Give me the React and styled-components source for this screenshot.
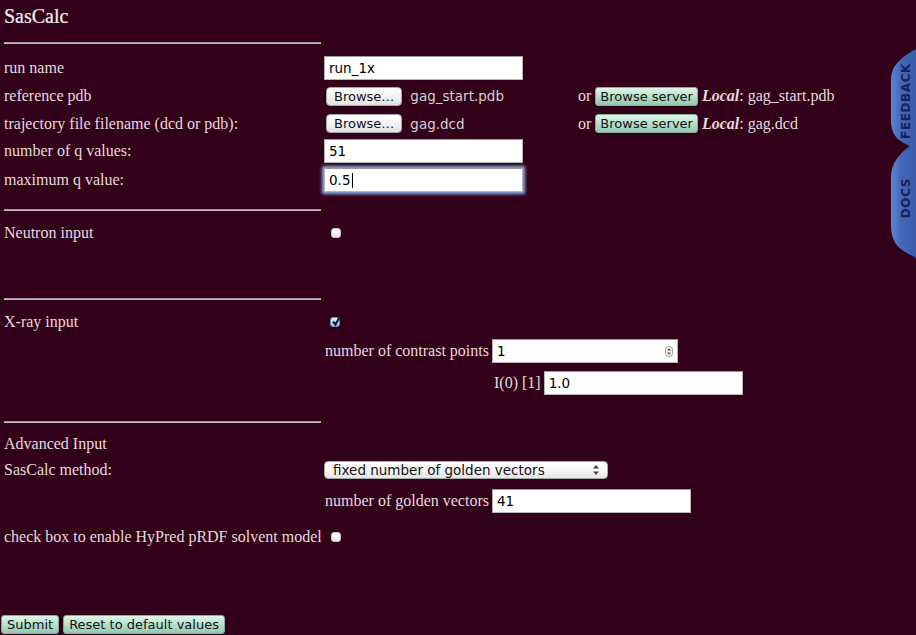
import React from "react";
import styled, { createGlobalStyle } from "styled-components";

const GlobalStyle = createGlobalStyle`
  html, body {
    margin: 0;
    padding: 0;
    background: #33001a;
  }
  body {
    font-family: "Liberation Serif", "Times New Roman", serif;
    font-size: 16px;
    color: #e4dbdf;
  }
`;

const Page = styled.div`
  position: relative;
  width: 916px;
  height: 635px;
  overflow: hidden;
`;

const Form = styled.div`
  padding-left: 4px;
`;

const Title = styled.h1`
  margin: 0;
  padding-top: 4px;
  font-size: 20px;
  line-height: 24px;
  font-weight: normal;
  color: #f4f0f2;
  -webkit-text-stroke: 0.2px #f4f0f2;
`;

const Rule = styled.div`
  width: 317px;
  height: 1px;
  border-top: 1px solid #9c969a;
  background: #c4bec2;
  margin-top: ${(p) => p.top}px;
`;

const Row = styled.div`
  display: flex;
  align-items: center;
  height: ${(p) => p.h || 28}px;
  margin-top: ${(p) => p.top || 0}px;
  padding-left: ${(p) => p.indent || 0}px;
  white-space: nowrap;
`;

const Label = styled.div`
  width: 320px;
  flex: none;
`;

const TextInput = styled.input`
  box-sizing: border-box;
  width: ${(p) => p.w || 199}px;
  height: 24px;
  margin: 0;
  padding: 0 4px;
  border: 1px solid #b4b4b4;
  border-top-color: #9a9a9a;
  background: #fff;
  font-family: "DejaVu Sans", "Lucida Grande", sans-serif;
  font-size: 13.5px;
  color: #000;
  outline: none;
  box-shadow: ${(p) => (p.focused ? "0 0 3px 2px #86b0ea" : "none")};
`;

const InputWrap = styled.div`
  position: relative;
  display: inline-flex;
`;

const Caret = styled.span`
  position: absolute;
  left: 28px;
  top: 5px;
  width: 1px;
  height: 15px;
  background: #000;
`;

const Spinner = styled.svg`
  position: absolute;
  right: 5px;
  top: 7px;
`;

const FileCell = styled.div`
  display: flex;
  align-items: center;
  width: 254px;
  padding-left: 2px;
  box-sizing: border-box;
`;

const Button = styled.button`
  box-sizing: border-box;
  height: 19px;
  margin: 0;
  padding: 0 ${(p) => p.pad || 7}px;
  border: 1px solid #a6a6a6;
  border-radius: 4px;
  background: linear-gradient(#ffffff, #f2f2f2 50%, #e2e2e2);
  font-family: "DejaVu Sans", "Lucida Grande", sans-serif;
  font-size: 13px;
  line-height: 17px;
  color: #111;
`;

const GreenButton = styled(Button)`
  border: 1px solid #7fae98;
  border-radius: 3px;
  background: linear-gradient(#dff5ea, #b8e0cc 50%, #94c8ae);
  padding: 0 ${(p) => p.pad || 4}px;
`;

const FileName = styled.span`
  margin-left: 8px;
  font-family: "DejaVu Sans", "Lucida Grande", sans-serif;
  font-size: 13.5px;
  color: #d6d2d4;
`;

const Or = styled.span`
  margin-right: 4px;
`;

const Local = styled.span`
  margin-left: 4px;
  em {
    font-weight: bold;
  }
`;

const Box = styled.span`
  display: inline-flex;
  box-sizing: border-box;
  width: 10px;
  height: 10px;
  margin-left: ${(p) => p.left || 6}px;
  border-radius: 3px;
  border: 1px solid ${(p) => (p.checked ? "#6f8fb8" : "#c8c8c8")};
  background: ${(p) =>
    p.checked ? "linear-gradient(#e2f0ff, #a4cbf2)" : "linear-gradient(#ffffff, #e6e6e6)"};
  position: relative;
`;

const Check = styled.svg`
  position: absolute;
  left: -1px;
  top: -4px;
`;

const SubLabel = styled.span`
  margin-right: 3px;
`;

const SelectWrap = styled.div`
  position: relative;
  display: inline-flex;
`;

const Select = styled.select`
  appearance: none;
  box-sizing: border-box;
  width: 284px;
  height: 18px;
  margin: 0;
  padding: 0 0 0 8px;
  border: 1px solid #a8a8a8;
  border-radius: 4px;
  background: linear-gradient(#ffffff, #f4f4f4 60%, #e4e4e4);
  font-family: "DejaVu Sans", "Lucida Grande", sans-serif;
  font-size: 13.5px;
  line-height: 16px;
  color: #111;
`;

const SelectArrows = styled.svg`
  position: absolute;
  right: 9px;
  top: 4px;
  pointer-events: none;
`;

const Buttons = styled.div`
  display: flex;
  gap: 4px;
  padding-left: 1px;
  margin-top: 64px;
`;

const Tabs = styled.div`
  position: absolute;
  right: 0;
  top: 0;
  width: 25px;
  height: 270px;
`;

const Tab = styled.div`
  position: absolute;
  right: 0;
  top: ${(p) => p.top}px;
  width: 25px;
  height: ${(p) => p.h}px;
  display: flex;
  align-items: center;
  justify-content: center;
`;

const TabShape = styled.svg`
  position: absolute;
  left: 0;
  top: 0;
`;

const TabText = styled.span`
  position: relative;
  writing-mode: vertical-rl;
  transform: rotate(180deg);
  font-family: "DejaVu Sans", Verdana, sans-serif;
  font-weight: bold;
  font-size: 12px;
  letter-spacing: 0.6px;
  color: #1b2160;
  margin-left: 5px;
  margin-top: ${(p) => p.shift || 0}px;
`;

const Checkbox = ({ checked, left }) => (
  <Box checked={checked} left={left}>
    {checked && (
      <Check width="12" height="13" viewBox="0 0 12 13">
        <path d="M3 7.5 L5.5 10.5 L10.5 1.5" stroke="#0e1e40" strokeWidth="2.2" fill="none" />
      </Check>
    )}
  </Box>
);

const SideTab = ({ top, h, text, shift }) => (
  <Tab top={top} h={h}>
    <TabShape width="25" height={h} viewBox="0 0 25 100" preserveAspectRatio="none">
      <defs>
        <linearGradient id={"g" + text} x1="0" x2="1" y1="0" y2="0">
          <stop offset="0" stopColor="#5e84d6" />
          <stop offset="0.4" stopColor="#4468b8" />
          <stop offset="1" stopColor="#3a5cab" />
        </linearGradient>
      </defs>
      <path
        d="M25 0 C20 3 14 6 8 12 C2 18 0 24 0 32 L0 72 C0 82 4 89 11 93 C16 96 21 98 25 100 Z"
        fill={"url(#g" + text + ")"}
      />
    </TabShape>
    <TabText shift={shift}>{text}</TabText>
  </Tab>
);

export default function App() {
  return (
    <Page>
      <GlobalStyle />
      <Form>
        <Title>SasCalc</Title>
        <Rule top={14} />

        <Row top={10}>
          <Label>run name</Label>
          <TextInput defaultValue="run_1x" />
        </Row>
        <Row>
          <Label>reference pdb</Label>
          <FileCell>
            <Button>Browse…</Button>
            <FileName>gag_start.pdb</FileName>
          </FileCell>
          <Or>or</Or>
          <GreenButton>Browse server</GreenButton>
          <Local>
            <em>Local</em>: gag_start.pdb
          </Local>
        </Row>
        <Row h={27}>
          <Label>trajectory file filename (dcd or pdb):</Label>
          <FileCell>
            <Button>Browse…</Button>
            <FileName>gag.dcd</FileName>
          </FileCell>
          <Or>or</Or>
          <GreenButton>Browse server</GreenButton>
          <Local>
            <em>Local</em>: gag.dcd
          </Local>
        </Row>
        <Row>
          <Label>number of q values:</Label>
          <TextInput defaultValue="51" />
        </Row>
        <Row h={30}>
          <Label>maximum q value:</Label>
          <InputWrap>
            <TextInput defaultValue="0.5" focused />
            <Caret />
          </InputWrap>
        </Row>
        <Rule top={14} />

        <Row top={8}>
          <Label>Neutron input</Label>
          <Checkbox left={7} />
        </Row>
        <Rule top={51} />

        <Row top={8}>
          <Label>X-ray input</Label>
          <Checkbox left={6} checked />
        </Row>
        <Row top={1} indent={321}>
          <SubLabel>number of contrast points</SubLabel>
          <InputWrap>
            <TextInput defaultValue="1" w={186} />
            <Spinner width="8" height="11" viewBox="0 0 8 11">
              <rect x="0.5" y="0.5" width="7" height="10" rx="3" fill="#fafafa" stroke="#9a9a9a" />
              <path d="M4 2 L6 4.5 L2 4.5 Z M4 9 L6 6.5 L2 6.5 Z" fill="#555" />
            </Spinner>
          </InputWrap>
        </Row>
        <Row top={4} indent={490}>
          <SubLabel>I(0) [1]</SubLabel>
          <TextInput defaultValue="1.0" />
        </Row>
        <Rule top={24} />

        <Row top={8} h={25}>
          <Label>Advanced Input</Label>
        </Row>
        <Row>
          <Label>SasCalc method:</Label>
          <SelectWrap>
            <Select defaultValue="fixed">
              <option value="fixed">fixed number of golden vectors</option>
            </Select>
            <SelectArrows width="6" height="10" viewBox="0 0 6 10">
              <path d="M3 0 L6 3.5 L0 3.5 Z M3 10 L6 6.5 L0 6.5 Z" fill="#444" />
            </SelectArrows>
          </SelectWrap>
        </Row>
        <Row top={3} indent={321}>
          <SubLabel>number of golden vectors</SubLabel>
          <TextInput defaultValue="41" />
        </Row>
        <Row top={8}>
          <Label>check box to enable HyPred pRDF solvent model</Label>
          <Checkbox left={7} />
        </Row>
      </Form>

      <Buttons>
        <GreenButton pad={5}>Submit</GreenButton>
        <GreenButton pad={5}>Reset to default values</GreenButton>
      </Buttons>

      <Tabs>
        <SideTab top={49} h={100} text="FEEDBACK" shift={4} />
        <SideTab top={142} h={116} text="DOCS" shift={-4} />
      </Tabs>
    </Page>
  );
}
